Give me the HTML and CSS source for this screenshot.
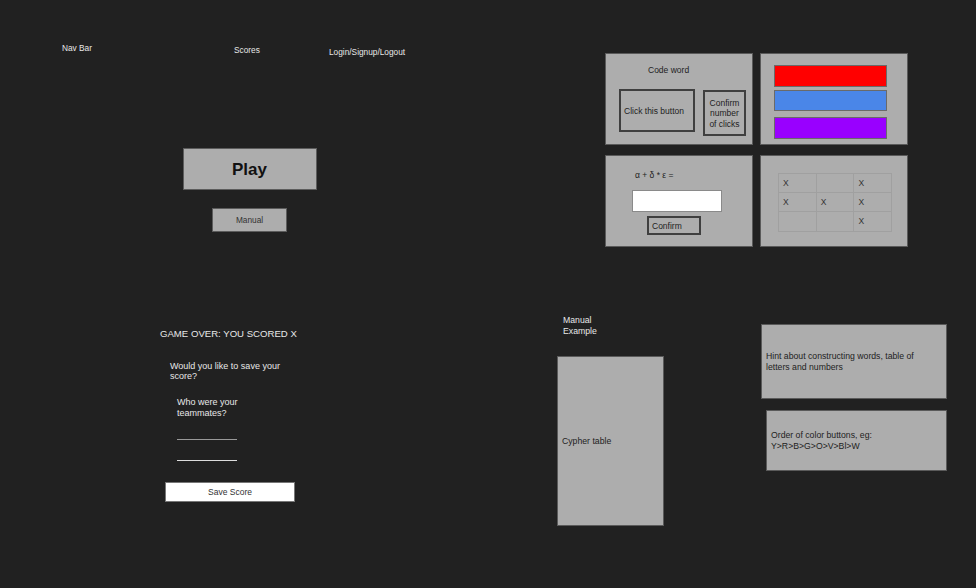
FILE: index.html
```html
<!DOCTYPE html>
<html>
<head>
<meta charset="utf-8">
<link rel="stylesheet" href="styles.css">
</head>
<body>
<div class="canvas">
  <section class="sketch home">
    <nav class="nav">
      <span class="nav-item nav-brand">Nav Bar</span>
      <span class="nav-item nav-scores">Scores</span>
      <span class="nav-item nav-login">Login/Signup/Logout</span>
    </nav>
    <div class="home-actions">
      <div class="btn-play">Play</div>
      <div class="btn-manual">Manual</div>
    </div>
  </section>

  <section class="sketch puzzles">
    <div class="panel panel-code">
      <div class="code-title">Code word</div>
      <div class="code-row">
        <div class="click-box">Click this button</div>
        <div class="confirm-box">Confirm<br>number<br>of clicks</div>
      </div>
    </div>
    <div class="panel panel-colors">
      <div class="bar bar-red"></div>
      <div class="bar bar-blue"></div>
      <div class="bar bar-purple"></div>
    </div>
    <div class="panel panel-math">
      <div class="math-eq">α + δ * ε =</div>
      <div class="math-input"></div>
      <div class="math-confirm">Confirm</div>
    </div>
    <div class="panel panel-grid">
      <div class="xgrid">
        <div class="cell">X</div><div class="cell"></div><div class="cell">X</div>
        <div class="cell">X</div><div class="cell">X</div><div class="cell">X</div>
        <div class="cell"></div><div class="cell"></div><div class="cell">X</div>
      </div>
    </div>
  </section>

  <section class="sketch gameover">
    <div class="go-title">GAME OVER: YOU SCORED X</div>
    <div class="go-question">Would you like to save your score?</div>
    <div class="go-team">Who were your teammates?</div>
    <div class="go-line go-line-1"></div>
    <div class="go-line go-line-2"></div>
    <div class="go-save">Save Score</div>
  </section>

  <section class="sketch manual">
    <div class="manual-title">Manual<br>Example</div>
    <div class="cypher">Cypher table</div>
  </section>

  <section class="sketch hints">
    <div class="hint-box hint-words">Hint about constructing words, table of letters and numbers</div>
    <div class="hint-box hint-order">Order of color buttons, eg: Y&gt;R&gt;B&gt;G&gt;O&gt;V&gt;Bl&gt;W</div>
  </section>
</div>
</body>
</html>
```

FILE: styles.css
```css
* { box-sizing: border-box; }
html, body {
  margin: 0;
  padding: 0;
  background: #212121;
}
body {
  font-family: "Liberation Sans", Arial, sans-serif;
  font-size: 9px;
  color: #e8e8e8;
}
.canvas {
  position: relative;
  width: 976px;
  height: 588px;
  overflow: hidden;
}
.sketch { position: absolute; }

/* ---------- home ---------- */
.home { left: 0; top: 0; width: 440px; }
.nav {
  display: flex;
  align-items: flex-start;
  padding: 43px 0 0 62px;
  font-size: 8.3px;
  line-height: 10px;
}
.nav-brand { width: 172px; }
.nav-scores { width: 95px; margin-top: 2px; }
.nav-login { margin-top: 4px; }
.home-actions {
  display: flex;
  flex-direction: column;
  align-items: center;
  width: 500px;
  margin-top: 91px;
  padding-right: 1px;
}
.btn-play {
  width: 134px;
  height: 42px;
  background: #adadad;
  border: 1px solid #5c5c5c;
  color: #111;
  font-weight: bold;
  font-size: 17px;
  display: flex;
  align-items: center;
  justify-content: center;
  padding-top: 1px;
}
.btn-manual {
  margin-top: 18px;
  width: 75px;
  height: 24px;
  background: #adadad;
  border: 1px solid #5c5c5c;
  color: #333;
  font-size: 8.3px;
  display: flex;
  align-items: center;
  justify-content: center;
}

/* ---------- puzzles ---------- */
.puzzles {
  left: 605px;
  top: 53px;
  display: grid;
  grid-template-columns: 148px 148px;
  grid-template-rows: 92px 92px;
  column-gap: 7px;
  row-gap: 10px;
}
.panel {
  background: #adadad;
  border: 1px solid #5a5a5a;
  color: #222;
  font-size: 8.5px;
  line-height: 10px;
}
.panel-code { padding: 11px 0 0 13px; }
.code-title { padding-left: 29px; }
.code-row {
  display: flex;
  align-items: flex-start;
  margin-top: 14px;
}
.click-box {
  width: 76px;
  height: 43px;
  border: 2px solid #3f3f3f;
  display: flex;
  align-items: center;
  padding-left: 3px;
  white-space: nowrap;
}
.confirm-box {
  width: 43px;
  height: 46px;
  margin-left: 8px;
  margin-top: 1px;
  border: 2px solid #3f3f3f;
  display: flex;
  align-items: center;
  justify-content: center;
  text-align: center;
  line-height: 10.5px;
  padding-top: 1px;
}
.panel-colors {
  display: flex;
  flex-direction: column;
  padding: 11px 0 0 13px;
}
.bar {
  width: 113px;
  border: 1px solid #6a6a6a;
}
.bar-red { height: 22px; background: #ff0000; }
.bar-blue { height: 21px; margin-top: 3px; background: #4a86e8; }
.bar-purple { height: 22px; margin-top: 6px; background: #9900ff; }

.panel-math {
  display: flex;
  flex-direction: column;
  align-items: flex-start;
  padding: 14px 0 0 26px;
}
.math-eq { padding-left: 3px; font-size: 8.5px; }
.math-input {
  width: 90px;
  height: 22px;
  margin-top: 10px;
  background: #fff;
  border: 1px solid #8a8a8a;
}
.math-confirm {
  width: 54px;
  height: 19px;
  margin: 4px 0 0 15px;
  border: 2px solid #3f3f3f;
  display: flex;
  align-items: center;
  padding-left: 3px;
}
.panel-grid { padding: 17px 0 0 17px; }
.xgrid {
  display: grid;
  grid-template-columns: repeat(3, 37.7px);
  grid-template-rows: repeat(3, 19.2px);
  border-top: 1px solid #a0a0a0;
  border-left: 1px solid #a0a0a0;
  width: 114px;
}
.cell {
  border-right: 1px solid #a0a0a0;
  border-bottom: 1px solid #a0a0a0;
  display: flex;
  align-items: center;
  padding-left: 4px;
  color: #333;
  font-size: 8.5px;
}

/* ---------- game over ---------- */
.gameover {
  left: 160px;
  top: 328px;
  width: 150px;
  display: flex;
  flex-direction: column;
  align-items: flex-start;
}
.go-title { font-size: 9.6px; line-height: 12px; }
.go-question {
  margin: 21px 0 0 10px;
  width: 120px;
  line-height: 10.3px;
}
.go-team {
  margin: 15px 0 0 17px;
  width: 80px;
  line-height: 11px;
}
.go-line {
  width: 60px;
  height: 1px;
  margin-left: 17px;
}
.go-line-1 { margin-top: 20px; background: #999; }
.go-line-2 { margin-top: 20px; background: #ddd; }
.go-save {
  margin: 21px 0 0 5px;
  width: 130px;
  height: 20px;
  background: #fff;
  border: 1px solid #777;
  color: #333;
  font-size: 8.5px;
  display: flex;
  align-items: center;
  justify-content: center;
}

/* ---------- manual ---------- */
.manual {
  left: 557px;
  top: 315px;
  display: flex;
  flex-direction: column;
}
.manual-title {
  padding-left: 6px;
  line-height: 10.7px;
  font-size: 8.7px;
}
.cypher {
  margin-top: 20px;
  width: 107px;
  height: 170px;
  background: #adadad;
  border: 1px solid #5a5a5a;
  color: #222;
  display: flex;
  align-items: center;
  padding-left: 4px;
  font-size: 8.7px;
}

/* ---------- hints ---------- */
.hints {
  left: 761px;
  top: 324px;
  display: flex;
  flex-direction: column;
}
.hint-box {
  background: #adadad;
  border: 1px solid #5a5a5a;
  color: #222;
  display: flex;
  align-items: center;
  line-height: 10.3px;
  font-size: 8.7px;
}
.hint-words {
  width: 186px;
  height: 75px;
  padding: 0 10px 0 4px;
}
.hint-order {
  width: 181px;
  height: 61px;
  margin: 11px 0 0 5px;
  padding: 0 40px 0 4px;
}
```
